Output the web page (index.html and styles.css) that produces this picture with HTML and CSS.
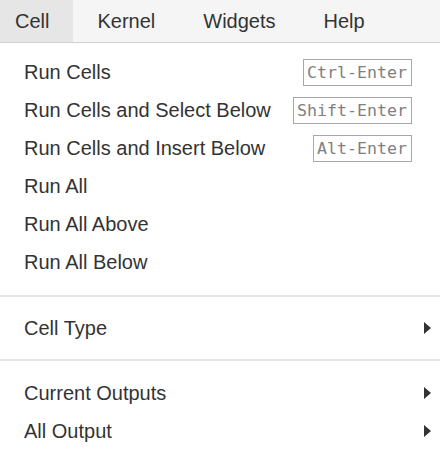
FILE: index.html
```html
<!DOCTYPE html>
<html>
<head>
<meta charset="utf-8">
<link rel="stylesheet" href="styles.css">
</head>
<body>
<div class="menubar">
  <div class="tab tab-active">Cell</div>
  <div class="tab">Kernel</div>
  <div class="tab">Widgets</div>
  <div class="tab">Help</div>
</div>
<div class="menu">
  <div class="item"><span>Run Cells</span><span class="kbd">Ctrl-Enter</span></div>
  <div class="item"><span>Run Cells and Select Below</span><span class="kbd">Shift-Enter</span></div>
  <div class="item"><span>Run Cells and Insert Below</span><span class="kbd">Alt-Enter</span></div>
  <div class="item"><span>Run All</span></div>
  <div class="item"><span>Run All Above</span></div>
  <div class="item"><span>Run All Below</span></div>
  <div class="sep sep-a"></div>
  <div class="item sub"><span>Cell Type</span><svg class="caret" width="7" height="12" viewBox="0 0 7 12"><polygon points="0,0 7,6 0,12" /></svg></div>
  <div class="sep sep-b"></div>
  <div class="item sub"><span>Current Outputs</span><svg class="caret" width="7" height="12" viewBox="0 0 7 12"><polygon points="0,0 7,6 0,12" /></svg></div>
  <div class="item sub"><span>All Output</span><svg class="caret" width="7" height="12" viewBox="0 0 7 12"><polygon points="0,0 7,6 0,12" /></svg></div>
</div>
</body>
</html>
```

FILE: styles.css
```css
html, body {
  margin: 0;
  padding: 0;
  background: #ffffff;
}
body {
  width: 440px;
  height: 456px;
  overflow: hidden;
  font-family: "Liberation Sans", Arial, sans-serif;
  font-size: 20px;
  color: #333333;
}
.menubar {
  display: flex;
  height: 42px;
  background: #f5f5f5;
  border-bottom: 1px solid #cfcfcf;
}
.tab {
  line-height: 42px;
  padding: 0 24px;
  color: #333333;
}
.tab-active {
  background: #e6e6e6;
  padding-left: 15px;
}
.menu {
  padding-top: 10px;
}
.item {
  display: flex;
  align-items: center;
  justify-content: space-between;
  height: 38px;
  line-height: 38px;
  padding: 0 28px 0 24px;
}
.item.sub {
  padding-right: 9px;
}
.kbd {
  font-family: "DejaVu Sans Mono", "Liberation Mono", monospace;
  font-size: 16.6px;
  line-height: 25px;
  height: 25px;
  padding: 0 4px 0 3px;
  border: 1px solid #a8a8a8;
  color: #808080;
}
.caret {
  display: block;
  fill: #333333;
}
.sep {
  height: 2px;
  background: #e5e5e5;
}
.sep-a {
  margin: 14px 0 12px;
}
.sep-b {
  margin: 12px 0 13px;
}
```
